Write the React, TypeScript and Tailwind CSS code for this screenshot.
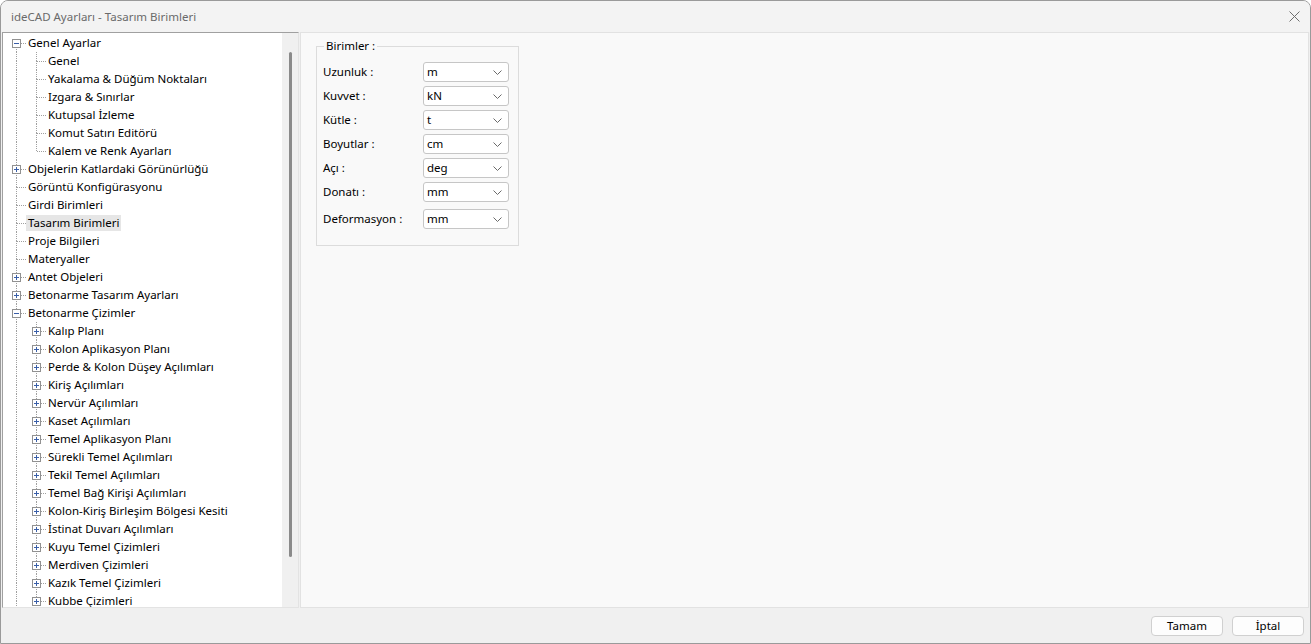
import React from 'react';

type Node = {
    label: string;
    level: 0 | 1;
    box?: '+' | '-';
    last?: boolean;
    first?: boolean;
    selected?: boolean;
};

const tree: Node[] = [
    { label: 'Genel Ayarlar', level: 0, box: '-', first: true },
    { label: 'Genel', level: 1 },
    { label: 'Yakalama & Düğüm Noktaları', level: 1 },
    { label: 'Izgara & Sınırlar', level: 1 },
    { label: 'Kutupsal İzleme', level: 1 },
    { label: 'Komut Satırı Editörü', level: 1 },
    { label: 'Kalem ve Renk Ayarları', level: 1, last: true },
    { label: 'Objelerin Katlardaki Görünürlüğü', level: 0, box: '+' },
    { label: 'Görüntü Konfigürasyonu', level: 0 },
    { label: 'Girdi Birimleri', level: 0 },
    { label: 'Tasarım Birimleri', level: 0, selected: true },
    { label: 'Proje Bilgileri', level: 0 },
    { label: 'Materyaller', level: 0 },
    { label: 'Antet Objeleri', level: 0, box: '+' },
    { label: 'Betonarme Tasarım Ayarları', level: 0, box: '+' },
    { label: 'Betonarme Çizimler', level: 0, box: '-' },
    { label: 'Kalıp Planı', level: 1, box: '+' },
    { label: 'Kolon Aplikasyon Planı', level: 1, box: '+' },
    { label: 'Perde & Kolon Düşey Açılımları', level: 1, box: '+' },
    { label: 'Kiriş Açılımları', level: 1, box: '+' },
    { label: 'Nervür Açılımları', level: 1, box: '+' },
    { label: 'Kaset Açılımları', level: 1, box: '+' },
    { label: 'Temel Aplikasyon Planı', level: 1, box: '+' },
    { label: 'Sürekli Temel Açılımları', level: 1, box: '+' },
    { label: 'Tekil Temel Açılımları', level: 1, box: '+' },
    { label: 'Temel Bağ Kirişi Açılımları', level: 1, box: '+' },
    { label: 'Kolon-Kiriş Birleşim Bölgesi Kesiti', level: 1, box: '+' },
    { label: 'İstinat Duvarı Açılımları', level: 1, box: '+' },
    { label: 'Kuyu Temel Çizimleri', level: 1, box: '+' },
    { label: 'Merdiven Çizimleri', level: 1, box: '+' },
    { label: 'Kazık Temel Çizimleri', level: 1, box: '+' },
    { label: 'Kubbe Çizimleri', level: 1, box: '+' },
];

const units = [
    { label: 'Uzunluk :', value: 'm' },
    { label: 'Kuvvet :', value: 'kN' },
    { label: 'Kütle :', value: 't' },
    { label: 'Boyutlar :', value: 'cm' },
    { label: 'Açı :', value: 'deg' },
    { label: 'Donatı :', value: 'mm' },
    { label: 'Deformasyon :', value: 'mm' },
];

// one 20x18 cell of the tree's dotted guide lines
const Guide = ({
    top,
    bottom,
    branch,
    box,
}: {
    top?: boolean;
    bottom?: boolean;
    branch?: boolean;
    box?: '+' | '-';
}) => (
    <svg width={20} height={18} className="shrink-0">
        <g stroke="#a0a0a0" strokeWidth={1} strokeDasharray="1 1">
            {top && <line x1={10.5} y1={0} x2={10.5} y2={9} />}
            {bottom && <line x1={10.5} y1={9} x2={10.5} y2={18} />}
            {branch && <line x1={11} y1={9.5} x2={20} y2={9.5} />}
        </g>
        {box && (
            <g>
                <rect x={6.5} y={5.5} width={8} height={8} fill="#fff" stroke="#919191" />
                <line x1={8} y1={9.5} x2={13} y2={9.5} stroke="#3a5fa8" />
                {box === '+' && <line x1={10.5} y1={7} x2={10.5} y2={12} stroke="#3a5fa8" />}
            </g>
        )}
    </svg>
);

const TreeRow = ({ node }: { node: Node }) => (
    <div className="flex items-center h-[18px] shrink-0">
        {node.level === 0 ? (
            <Guide top={!node.first} bottom branch box={node.box} />
        ) : (
            <>
                <Guide top bottom />
                <Guide top bottom={!node.last} branch box={node.box} />
            </>
        )}
        <span
            className={`px-[2px] h-[16px] leading-[16px] whitespace-nowrap ${
                node.selected ? 'bg-[#e6e6e6]' : ''
            }`}
        >
            {node.label}
        </span>
    </div>
);

const Select = ({ value }: { value: string }) => (
    <div className="flex items-center justify-between w-[86px] h-[20px] bg-white border border-[#c6c6c6] rounded-[3px] pl-[3px] pr-[6px]">
        <span>{value}</span>
        <svg width={9} height={5} viewBox="0 0 9 5" fill="none">
            <path d="M0.5 0.5 L4.5 4.5 L8.5 0.5" stroke="#6a6a6a" strokeWidth={1} />
        </svg>
    </div>
);

export default function App() {
    return (
        <div className="w-[1311px] h-[644px] flex flex-col bg-[#f0f0f0] border border-[#9a9a9a] rounded-t-[8px] overflow-hidden text-[11.5px] text-black font-['Noto_Sans',sans-serif]">
            {/* title bar */}
            <div className="h-[31px] shrink-0 flex items-center justify-between bg-[#f3f3f3] pl-[10px] pr-[10px]">
                <span className="text-[11.5px] text-[#6a6a6a]">ideCAD Ayarları - Tasarım Birimleri</span>
                <svg width={11} height={11} viewBox="0 0 11 11">
                    <path d="M0.5 0.5 L10.5 10.5 M10.5 0.5 L0.5 10.5" stroke="#6e6e6e" strokeWidth={1} />
                </svg>
            </div>

            {/* body */}
            <div className="flex-1 flex gap-[1px] pl-[1px] pr-[1px] min-h-0">
                <div className="w-[297px] shrink-0 flex border-t border-l border-t-[#a0a0a0] border-l-[#a0a0a0] border-r border-b border-r-[#e3e3e3] border-b-[#e3e3e3]">
                    <div className="flex-1 bg-white flex flex-col pt-[1px] pl-[3px] overflow-hidden">
                        {tree.map((node, i) => (
                            <TreeRow key={i} node={node} />
                        ))}
                    </div>
                    <div className="w-[16px] bg-[#f0f0f0] flex justify-center pt-[19px]">
                        <div className="w-[3px] h-[505px] bg-[#8a8a8a] rounded-full ml-[1px]" />
                    </div>
                </div>

                <div className="flex-1 bg-[#f9f9f9] border border-[#e2e2e2] pl-[15px] pt-[6px]">
                    <fieldset className="w-[203px] border border-[#dcdcdc] pl-[6px] pr-[9px] pt-[9px] pb-[16px]">
                        <legend className="ml-[1px] px-[2px] leading-[14px]">Birimler :</legend>
                        <div className="flex flex-col gap-[4px]">
                            {units.map((u, i) => (
                                <div key={i} className={`flex items-center ${i === 6 ? 'mt-[3px]' : ''}`}>
                                    <span className="w-[100px]">{u.label}</span>
                                    <Select value={u.value} />
                                </div>
                            ))}
                        </div>
                    </fieldset>
                </div>
            </div>

            {/* footer */}
            <div className="h-[35px] shrink-0 flex justify-end items-start gap-[9px] pt-[8px] pr-[6px]">
                <button className="w-[72px] h-[20px] bg-[#fdfdfd] border border-[#d0d0d0] rounded-[4px] leading-none">
                    Tamam
                </button>
                <button className="w-[72px] h-[20px] bg-[#fdfdfd] border border-[#d0d0d0] rounded-[4px] leading-none">
                    İptal
                </button>
            </div>
        </div>
    );
}
